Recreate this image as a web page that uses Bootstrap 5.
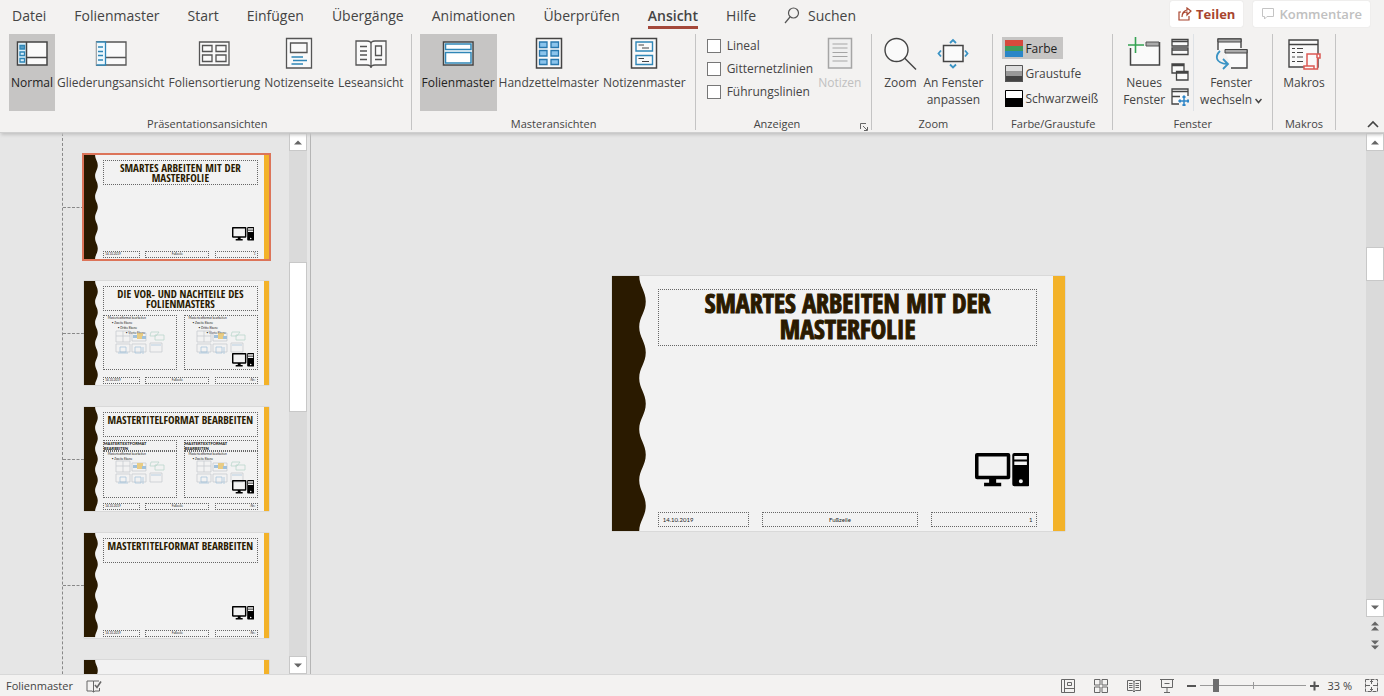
<!DOCTYPE html>
<html lang="de">
<head>
<meta charset="utf-8">
<meta name="viewport" content="width=device-width, initial-scale=1">
<title>Folienmaster – Ansicht</title>
<link href="https://cdn.jsdelivr.net/npm/bootstrap@5.3.0/dist/css/bootstrap.min.css" rel="stylesheet">
<style>
  :root { --ink:#444; --ribbon:#f3f2f1; --desk:#e6e6e6; --pressed:#c6c5c4; --accent:#a4483a; --line:#c4c4c4; --blue:#2f86b7; }
  body { font-family:"Open Sans","Noto Sans",sans-serif; font-size:12px; line-height:17px; color:var(--ink); background:var(--desk); }
  button { font:inherit; color:inherit; background:none; border:0; padding:0; }
  svg { display:block; flex:none; }

  /* tabs */
  .tabbar { height:34px; padding:1px 14px 0 12px; background:var(--ribbon); }
  .tabs { gap:28px; font-size:14px; line-height:20px; padding-top:5px; }
  .tabs a { color:var(--ink); text-decoration:none; }
  .tabs a.current { font-weight:600; border-bottom:3px solid var(--accent); }
  .topbtn { height:26px; padding:0 8px; background:#fff; border-radius:2px; font-size:13px; font-weight:600; box-shadow:0 0 1px #ccc; }
  .share { color:#a8452f; font-weight:700; }
  .muted { color:#c0c0c0; }

  /* ribbon */
  .ribbon { background:var(--ribbon); height:99px; border-bottom:1px solid #cfcfcf; box-shadow:0 3px 3px -1px #c4c4c4; z-index:1; }
  .grp { border-right:1px solid var(--line); height:96px; }
  .grp-body { height:77px; }
  .grp-name { font-size:11px; line-height:16px; padding-top:5px; text-align:center; position:relative; }
  .big { height:77px; padding:3px 2px 0; white-space:nowrap; line-height:17px; display:flex; flex-direction:column; align-items:center; gap:4px; }
  .big.on, .rowbtn.on { background:var(--pressed); color:#222; }
  .check { display:flex; align-items:center; gap:6px; height:23px; white-space:nowrap; }
  .check input { appearance:none; width:14px; height:14px; border:1px solid #777; background:#fff; margin:0; }
  .rowbtn { display:flex; align-items:center; gap:2px; height:22px; padding:0 6px 0 3px; }
  .rows { gap:3px; padding-top:3px; }
  .launcher { position:absolute; right:-5px; bottom:1px; }

  /* slides */
  .slide { display:flex; aspect-ratio:453/255; background:#f2f2f2; box-shadow:0 0 1px #999; position:relative; overflow:hidden; font-family:Lato,"Open Sans",sans-serif; color:#222; }
  .slide .wave { width:8%; height:100%; }
  .slide .stripe { width:12px; background:#f3b229; }
  .slide-body { flex:1; min-width:0; padding:3% 4% 1% 2%; display:flex; flex-direction:column; }
  .stage .slide-body { padding-right:16px; padding-left:10px; }
  .ph { border:1px dotted #666; }
  .slide h2 { height:24%; margin:0; text-align:center; text-transform:uppercase; color:#2a1a00; font-family:"Open Sans Condensed",sans-serif; font-weight:700; -webkit-text-stroke:1px #2a1a00; font-size:26px; line-height:26px; }
  .foot { display:flex; justify-content:space-between; margin-top:auto; height:6%; font-size:6px; line-height:13px; }
  .foot .f1 { width:24%; padding-left:1%; }
  .foot .f2 { width:41%; text-align:center; }
  .foot .f3 { width:28%; padding-right:1%; text-align:right; }
  .pc { position:absolute; width:12%; left:80%; top:69.5%; }
  .stage .slide { width:43%; }
  .slide.thumb { width:185px; }
  .thumb .slide-body { padding:5px 6px 1px 4px; }
  .thumb .stripe { width:5px; }
  .thumb h2 { font-size:11px; line-height:10px; height:25px; padding-top:2px; -webkit-text-stroke:0; }
  .thumb .foot { height:7px; font-size:3px; line-height:5px; }
  .thumb .pair { display:flex; justify-content:space-between; }
  .thumb .pair > div { width:48%; position:relative; font-size:3px; line-height:5px; white-space:nowrap; }
  .tall { height:55px; }
  .mid { height:47px; }
  .thumb .pair > .capbox { height:11px; font-size:4px; font-weight:900; text-transform:uppercase; line-height:5px; }
  .art { position:absolute; left:11px; top:14px; opacity:.8; }
  .mid .art { top:8px; }
  .l1 { padding-left:4px; } .l2 { padding-left:8px; } .l3 { padding-left:14px; } .l4 { padding-left:22px; }

  .pane { width:289px; overflow:hidden; }
  .tree { margin:0 0 0 62px; padding:22px 0 0; list-style:none; border-left:1px dashed #888; gap:22px; }
  .twig { width:21px; border-top:1px dashed #888; }
  .chosen .thumb { outline:2px solid #dc7459; }
  .split { width:22px; border-right:1px solid #b5b5b5; padding-right:3px; }

  /* scroll bars */
  .sbar { width:18px; background:#dadada; }
  .sbar button, .knob { background:#fff; border:1px solid #c8c8c8; }
  .sbar button { height:18px; display:flex; align-items:center; justify-content:center; }
  .sbar .jump { background:var(--desk); border:0; height:19px; }

  /* status bar */
  .status { height:22px; background:var(--ribbon); border-top:1px solid #d8d8d8; font-size:11px; padding:0 6px; z-index:1; }
  .status input { appearance:none; width:106px; height:14px; margin:0 4px; background:linear-gradient(#999,#999) center/1px 7px no-repeat, linear-gradient(#999,#999) center/100% 1px no-repeat; }
  .status input::-webkit-slider-thumb { appearance:none; width:6px; height:13px; background:#6e6e6e; }
</style>
</head>
<body class="vh-100 d-flex flex-column overflow-hidden">

<svg width="0" height="0" class="position-absolute" aria-hidden="true">
  <symbol id="wave" viewBox="0 0 36 255" preserveAspectRatio="none"><path fill="#2a1a00" d="M0 0H27C27 10 33.500 15 33.500 25.500S27 41 27 51 33.500 66 33.500 76.500 27 92 27 102 33.500 117 33.500 127.500 27 143 27 153 33.500 168 33.500 178.500 27 194 27 204 33.500 219 33.500 229.500 27 245 27 255H0Z"/></symbol>
  <symbol id="pc" viewBox="0 0 54 34"><path fill-rule="evenodd" d="M2 0H33Q35 0 35 2V24Q35 26 33 26H21V29.500H26V33H9V29.500H14V26H2Q0 26 0 24V2Q0 0 2 0ZM3.500 3.500V22.500H31.500V3.500ZM39 0H52Q54 0 54 2V31Q54 33 52 33H39Q37 33 37 31V2Q37 0 39 0ZM39 3V6.500H51.500V3ZM39 8.500V12H51.500V8.500ZM45.500 26A2 2 0 1 0 45.500 30 2 2 0 1 0 45.500 26Z"/></symbol>
  <symbol id="art" viewBox="0 0 50 26"><g fill="none" stroke="#b9bfc4" stroke-width=".7"><path d="M1 1H15V12H1ZM1 6H15M8 1V12M17 3H31V11H17ZM1 14H15V22H1ZM17 14H31V22H17ZM35 13H47V22H35Z"/><path stroke="#a8cfc0" d="M36 2H44L41 6H35ZM40 5H49V10H40Z"/><path stroke="#8db6d6" d="M5 17H11V22H5ZM3 23H13M20 17H26V23H20ZM28 17V24M36 15H46"/></g><path fill="#e6c36b" d="M22 3H28V9H22Z"/><path fill="#8db6d6" d="M18 5H22V8H18ZM27 6H31V9H27Z"/></symbol>
  <symbol id="up" viewBox="0 0 8 5"><path fill="#666" d="M0 4.500L4 .5 8 4.500Z"/></symbol>
  <symbol id="down" viewBox="0 0 8 5"><path fill="#666" d="M0 .5L4 4.500 8 .5Z"/></symbol>
</svg>

<header class="tabbar d-flex justify-content-between align-items-start flex-shrink-0">
  <nav class="tabs d-flex">
    <a href="#">Datei</a><a href="#">Folienmaster</a><a href="#">Start</a><a href="#">Einfügen</a><a href="#">Übergänge</a><a href="#">Animationen</a><a href="#">Überprüfen</a><a href="#" class="current">Ansicht</a><a href="#">Hilfe</a>
    <a href="#" class="d-flex gap-2"><svg width="16" height="18" viewBox="0 0 16 18" fill="none" stroke="#555" stroke-width="1.200"><circle cx="9.500" cy="7" r="5"/><path d="M6 11L1 17"/></svg>Suchen</a>
  </nav>
  <div class="d-flex" style="gap:10px">
    <button class="topbtn share d-flex align-items-center gap-1"><svg width="14" height="14" viewBox="0 0 14 14" fill="none" stroke="#a8452f" stroke-width="1.200"><path d="M3 5H1V13H11V9M4 10Q4 5 9 5V8L13 4 9 1V3Q4 4 4 10Z"/></svg>Teilen</button>
    <button class="topbtn muted d-flex align-items-center gap-1" disabled><svg width="14" height="14" viewBox="0 0 14 14" fill="none" stroke="#c4c4c4"><path d="M1.500 1.500H12.500V9.500H6L3.500 12V9.500H1.500Z"/></svg>Kommentare</button>
  </div>
</header>

<section class="ribbon d-flex flex-shrink-0 position-relative">
  <div class="grp" style="padding:0 5px 0 9px">
    <div class="grp-body d-flex">
      <button class="big on"><svg width="32" height="33" viewBox="0 0 32 33"><path fill="#fafafa" stroke="#444" stroke-width="1.500" d="M1.500 5H31V28H1.500Z"/><path fill="#d8effa" d="M2.500 6H10V27H2.500Z"/><path fill="none" stroke="#444" stroke-width="1.500" d="M10.500 5V28M10.500 20.500H31"/><g stroke="#2f86b7" stroke-width="1.300" fill="none"><path fill="#5b9fc5" d="M4 8.500H8.500V12H4Z"/><path d="M4 15H8.500V18.500H4ZM4 21.500H8.500V25H4Z"/></g></svg>Normal</button>
      <button class="big"><svg width="32" height="33" viewBox="0 0 32 33"><path fill="#fafafa" stroke="#555" stroke-width="1.300" d="M1.500 5H31V28H1.500ZM11 20.500H31"/><path fill="#eef8fd" stroke="#2f86b7" stroke-width="1.300" d="M1.500 5H10.500V28H1.500M3 10H8M3 14.500H8M3 18.500H8M3 23H8"/></svg>Gliederungsansicht</button>
      <button class="big"><svg width="32" height="33" viewBox="0 0 32 33" fill="#fafafa" stroke="#555" stroke-width="1.300"><path d="M1.500 5H31V28H1.500Z"/><path d="M4.500 8.500H14V14.500H4.500ZM18 8.500H28V14.500H18ZM4.500 18H14V24.500H4.500ZM18 18H28V24.500H18Z"/></svg>Foliensortierung</button>
      <button class="big"><svg width="28" height="33" viewBox="0 0 28 33" fill="#fafafa" stroke="#555" stroke-width="1.300"><path d="M1.500 1.500H26.500V31H1.500Z"/><path d="M5.500 6H22V15.500H5.500Z"/><path stroke="#2f86b7" d="M6.500 20H18M8 23.500H22M6.500 27H18"/></svg>Notizenseite</button>
      <button class="big"><svg width="34" height="33" viewBox="0 0 34 33" fill="#fafafa" stroke="#555" stroke-width="1.300"><path d="M2 4H13Q17 4 17 7 17 4 21 4H32V28H21Q17 28 17 31 17 28 13 28H2ZM17 7V30"/><path d="M6 9.500H13M6 14H13M6 18H13M6 22.500H13M21.500 9H27.500V18.500H21.500ZM21 22.500H28"/></svg>Leseansicht</button>
    </div>
    <div class="grp-name">Präsentationsansichten</div>
  </div>

  <div class="grp" style="padding:0 7px 0 8px">
    <div class="grp-body d-flex">
      <button class="big on"><svg width="32" height="33" viewBox="0 0 32 33"><path fill="#fff" stroke="#444" stroke-width="1.500" d="M1.500 5H31V28H1.500Z"/><path fill="#fff" stroke="#2f86b7" stroke-width="1.500" d="M3.500 7H29V12.500H3.500ZM3.500 15.500H29V26H3.500Z"/></svg>Folienmaster</button>
      <button class="big"><svg width="28" height="33" viewBox="0 0 28 33"><path fill="#fafafa" stroke="#444" stroke-width="1.500" d="M1.500 1.500H26.500V31H1.500Z"/><path fill="#8bc4ec" stroke="#2878ae" stroke-width="1.300" d="M4.500 5H12V10.500H4.500ZM16 5H23.500V10.500H16ZM4.500 13.500H12V19H4.500ZM16 13.500H23.500V19H16ZM4.500 22.500H12V27.500H4.500ZM16 22.500H23.500V27.500H16Z"/></svg>Handzettelmaster</button>
      <button class="big"><svg width="28" height="33" viewBox="0 0 28 33" fill="#fafafa"><path stroke="#444" stroke-width="1.500" d="M1.500 1.500H26.500V31H1.500Z"/><path stroke="#2f86b7" stroke-width="1.400" d="M6 5H22.500V14H6ZM6 18.500H22.500V27.500H6Z"/><path stroke="#444" stroke-width="1.200" d="M8.500 8H14M12 11H19M8.500 21.500H14M12 24.500H19"/></svg>Notizenmaster</button>
    </div>
    <div class="grp-name">Masteransichten</div>
  </div>

  <div class="grp" style="padding:0 8px 0 11px">
    <div class="grp-body d-flex" style="gap:3px">
      <div>
        <label class="check"><input type="checkbox">Lineal</label>
        <label class="check"><input type="checkbox">Gitternetzlinien</label>
        <label class="check"><input type="checkbox">Führungslinien</label>
      </div>
      <button class="big muted" disabled><svg width="28" height="33" viewBox="0 0 28 33" fill="#f0f0f0" stroke="#a5a5a5" stroke-width="1.500"><path d="M2.500 1.500H25.500V31H2.500Z"/><path stroke-width="1.200" d="M6.500 7H21.500M6.500 11H21.500M6.500 15.500H21.500M6.500 19.500H21.500M6.500 24H21.500"/></svg>Notizen</button>
    </div>
    <div class="grp-name pe-3">Anzeigen<button class="launcher" aria-label="Rastereinstellungen"><svg width="8" height="8" viewBox="0 0 8 8" fill="none" stroke="#666"><path d="M.5 6V.5H6M3 3L7 7M7.500 4V7.500H4"/></svg></button></div>
  </div>

  <div class="grp" style="padding:0 7px 0 9px">
    <div class="grp-body d-flex" style="gap:2px">
      <button class="big"><svg width="34" height="33" viewBox="0 0 34 33" fill="#fafafa" stroke="#444" stroke-width="1.400"><circle cx="13.500" cy="13" r="11.500"/><path d="M21.500 21L33 32.500"/></svg>Zoom</button>
      <button class="big"><svg width="32" height="33" viewBox="0 0 32 33" fill="none"><path fill="#fafafa" stroke="#444" stroke-width="1.500" d="M6.500 8.500H26V24.500H6.500Z"/><path stroke="#3a93c4" stroke-width="1.800" d="M13 6L16 3 19 6M13 27.500L16 30.500 19 27.500M4 13.500L1.500 16.500 4 19.500M28 13.500L30.500 16.500 28 19.500"/></svg><span>An Fenster<br>anpassen</span></button>
    </div>
    <div class="grp-name">Zoom</div>
  </div>

  <div class="grp" style="padding:0 8px 0 9px">
    <div class="grp-body rows d-flex flex-column align-items-start">
      <button class="rowbtn on"><svg width="18" height="17" viewBox="0 0 18 17"><path fill="#d6493d" d="M0 0H18V6H0Z"/><path fill="#3e9a5c" d="M0 6H18V11H0Z"/><path fill="#2a86c7" d="M0 11H18V17H0Z"/></svg>Farbe</button>
      <button class="rowbtn"><svg width="18" height="17" viewBox="0 0 18 17"><path fill="#ddd" d="M0 0H18V6H0Z"/><path fill="#999" d="M0 6H18V11H0Z"/><path fill="#444" d="M0 11H18V17H0Z"/><path fill="none" stroke="#555" d="M.5 .5H17.500V16.500H.5Z"/></svg>Graustufe</button>
      <button class="rowbtn"><svg width="18" height="17" viewBox="0 0 18 17"><path fill="#fff" stroke="#000" d="M.5 .5H17.500V16.500H.5Z"/><path d="M0 8H18V17H0Z"/></svg>Schwarzweiß</button>
    </div>
    <div class="grp-name">Farbe/Graustufe</div>
  </div>

  <div class="grp" style="padding:0 8px">
    <div class="grp-body d-flex">
      <button class="big"><svg width="34" height="33" viewBox="0 0 34 33" fill="none"><path fill="#fafafa" d="M3.500 9H32V28H3.500Z"/><path stroke="#444" stroke-width="1.500" d="M3.500 11V28H32.500V5"/><path fill="#aaa" stroke="#555" d="M19 5H32V9H19Z"/><path stroke="#35a353" stroke-width="1.600" d="M8.500 0V16M1 8H17"/></svg><span>Neues<br>Fenster</span></button>
      <div class="d-flex flex-column px-1" style="gap:7px;padding-top:4px">
        <button aria-label="Alle anordnen"><svg width="18" height="18" viewBox="0 0 18 18" fill="#fafafa" stroke="#444" stroke-width="1.300"><path d="M1 1.500H17V8H1ZM1 10H17V16.500H1ZM1 3.500H17M1 12H17"/></svg></button>
        <button aria-label="Überlappend"><svg width="18" height="18" viewBox="0 0 18 18" fill="#fafafa" stroke="#444" stroke-width="1.300"><path d="M1 1H13V10H1ZM1 2.500H13"/><path d="M5.500 8.500H17V17H5.500ZM5.500 10H17"/></svg></button>
        <button aria-label="Teilung verschieben"><svg width="18" height="18" viewBox="0 0 18 18" fill="#fafafa" stroke="#444" stroke-width="1.300"><path d="M8 16H1V1H17V8M1 3.500H17M1 8.500H9"/><path fill="none" stroke="#2f86c7" stroke-width="1.500" d="M13 8V18M8 13H18M11.500 9.500L13 8 14.500 9.500M11.500 16.500L13 18 14.500 16.500M9.500 11.500L8 13 9.500 14.500M16.500 11.500L18 13 16.500 14.500"/></svg></button>
      </div>
      <div class="border-start me-1"></div>
      <button class="big"><svg width="34" height="33" viewBox="0 0 34 33" fill="none"><path fill="#fafafa" stroke="#444" stroke-width="1.400" d="M4 13V2H27V11"/><path fill="#aaa" stroke="#444" d="M4 2H27V5H4Z"/><path fill="#fafafa" stroke="#444" stroke-width="1.400" d="M11 13H33V31H17"/><path fill="#aaa" stroke="#444" d="M11 12.500H33V16H11Z"/><path stroke="#3a93c4" stroke-width="1.800" d="M6 14C1 19 1 26 13 27M9 22L14 27 9 32"/></svg><span>Fenster<br>wechseln <svg class="d-inline" width="7" height="6" viewBox="0 0 7 6" fill="none" stroke="#444" stroke-width="1.500"><path d="M.5 1L3.500 4.500 6.500 1"/></svg></span></button>
    </div>
    <div class="grp-name">Fenster</div>
  </div>

  <div class="grp" style="padding:0 8px">
    <div class="grp-body d-flex">
      <button class="big"><svg width="34" height="33" viewBox="0 0 34 33" fill="#fafafa" stroke="#444" stroke-width="1.400"><path d="M2 3H31V30H2ZM2 7.500H31"/><path stroke-width="1.200" stroke-dasharray="3 2 6 2" d="M5 11.500H18M5 15.500H18M5 20H18M5 24.500H18"/><path stroke="#dc5a54" stroke-width="1.500" d="M20 29V17H33V21H30.500V32H17V29H27V32M30 17V21"/></svg>Makros</button>
    </div>
    <div class="grp-name">Makros</div>
  </div>
  <button class="ms-auto align-self-end me-1" aria-label="Menüband reduzieren"><svg width="14" height="12" viewBox="0 0 14 12" fill="none" stroke="#444" stroke-width="1.600"><path d="M2 7L7 2 12 7"/></svg></button>
</section>

<main class="d-flex flex-grow-1" style="min-height:0">
  <aside class="pane flex-shrink-0">
    <ol class="tree d-flex flex-column">
      <li class="d-flex align-items-center chosen"><span class="twig"></span>
        <div class="slide thumb"><svg class="wave"><use href="#wave"/></svg><div class="slide-body"><h2 class="ph">Smartes Arbeiten mit der<br>Masterfolie</h2><div class="foot"><span class="ph f1">14.10.2019</span><span class="ph f2">Fußzeile</span><span class="ph f3">1</span></div></div><div class="stripe"></div><svg class="pc" viewBox="0 0 54 34"><use href="#pc"/></svg></div></li>
      <li class="d-flex align-items-center"><span class="twig"></span>
        <div class="slide thumb"><svg class="wave"><use href="#wave"/></svg><div class="slide-body"><h2 class="ph">Die Vor- und Nachteile des<br>Folienmasters</h2>
          <div class="pair mt-1">
            <div class="ph tall"><div class="l1">Mastertextformat bearbeiten</div><div class="l2">• Zweite Ebene</div><div class="l3">• Dritte Ebene</div><div class="l4">• Vierte Ebene</div><svg class="art" width="50" height="26"><use href="#art"/></svg></div>
            <div class="ph tall"><div class="l1">Mastertextformat bearbeiten</div><div class="l2">• Zweite Ebene</div><div class="l3">• Dritte Ebene</div><div class="l4">• Vierte Ebene</div><svg class="art" width="50" height="26"><use href="#art"/></svg></div>
          </div>
          <div class="foot"><span class="ph f1">14.10.2019</span><span class="ph f2">Fußzeile</span><span class="ph f3">‹Nr.›</span></div></div><div class="stripe"></div><svg class="pc" viewBox="0 0 54 34"><use href="#pc"/></svg></div></li>
      <li class="d-flex align-items-center"><span class="twig"></span>
        <div class="slide thumb"><svg class="wave"><use href="#wave"/></svg><div class="slide-body"><h2 class="ph">Mastertitelformat bearbeiten</h2>
          <div class="pair" style="padding-top:3px"><div class="ph capbox">Mastertextformat<br>bearbeiten</div><div class="ph capbox">Mastertextformat<br>bearbeiten</div></div>
          <div class="pair">
            <div class="ph mid"><div class="l1">Mastertextformat bearbeiten</div><div class="l2">• Zweite Ebene</div><svg class="art" width="50" height="26"><use href="#art"/></svg></div>
            <div class="ph mid"><div class="l1">Mastertextformat bearbeiten</div><div class="l2">• Zweite Ebene</div><svg class="art" width="50" height="26"><use href="#art"/></svg></div>
          </div>
          <div class="foot"><span class="ph f1">14.10.2019</span><span class="ph f2">Fußzeile</span><span class="ph f3">‹Nr.›</span></div></div><div class="stripe"></div><svg class="pc" viewBox="0 0 54 34"><use href="#pc"/></svg></div></li>
      <li class="d-flex align-items-center"><span class="twig"></span>
        <div class="slide thumb"><svg class="wave"><use href="#wave"/></svg><div class="slide-body"><h2 class="ph">Mastertitelformat bearbeiten</h2><div class="foot"><span class="ph f1">14.10.2019</span><span class="ph f2">Fußzeile</span><span class="ph f3">‹Nr.›</span></div></div><div class="stripe"></div><svg class="pc" viewBox="0 0 54 34"><use href="#pc"/></svg></div></li>
      <li class="d-flex align-items-center"><span class="twig"></span>
        <div class="slide thumb"><svg class="wave"><use href="#wave"/></svg><div class="slide-body"></div><div class="stripe"></div></div></li>
    </ol>
  </aside>
  <div class="split d-flex flex-shrink-0">
    <div class="sbar d-flex flex-column">
      <button aria-label="Nach oben"><svg width="8" height="5"><use href="#up"/></svg></button>
      <div style="flex:111"></div><div class="knob" style="flex:149"></div><div style="flex:244"></div>
      <button aria-label="Nach unten"><svg width="8" height="5"><use href="#down"/></svg></button>
    </div>
  </div>
  <div class="stage flex-grow-1 d-flex align-items-center justify-content-center">
    <div class="slide"><svg class="wave"><use href="#wave"/></svg><div class="slide-body"><h2 class="ph">Smartes Arbeiten mit der<br>Masterfolie</h2><div class="foot"><span class="ph f1">14.10.2019</span><span class="ph f2">Fußzeile</span><span class="ph f3">1</span></div></div><div class="stripe"></div><svg class="pc" viewBox="0 0 54 34"><use href="#pc"/></svg></div>
  </div>
  <div class="sbar d-flex flex-column flex-shrink-0">
    <button aria-label="Nach oben"><svg width="8" height="5"><use href="#up"/></svg></button>
    <div style="flex:96"></div><div class="knob" style="flex:32"></div><div style="flex:319"></div>
    <button aria-label="Nach unten"><svg width="8" height="5"><use href="#down"/></svg></button>
    <button class="jump" aria-label="Vorherige Folie"><svg width="8" height="10" viewBox="0 0 8 10" fill="#666"><path d="M0 4.500L4 .5 8 4.500ZM0 9.500L4 5.500 8 9.500Z"/></svg></button>
    <button class="jump" aria-label="Nächste Folie"><svg width="8" height="10" viewBox="0 0 8 10" fill="#666"><path d="M0 .5L4 4.500 8 .5ZM0 5.500L4 9.500 8 5.500Z"/></svg></button>
    <div class="jump"></div>
  </div>
</main>

<footer class="status d-flex align-items-center flex-shrink-0">
  <span>Folienmaster</span>
  <button style="margin-left:13px" aria-label="Rechtschreibung"><svg width="16" height="14" viewBox="0 0 16 14" fill="none" stroke="#666"><path d="M7.500 2V13M7.500 2H1V12H6L7.500 13 9 12H13.500V9M7.500 2H13"/><path stroke-width="1.600" d="M9 6L11 8.500 15 2.500"/></svg></button>
  <div class="d-flex ms-auto align-items-center">
    <div class="d-flex" style="gap:17px;margin-right:12px">
      <button aria-label="Normal"><svg width="16" height="14" viewBox="0 0 16 14" fill="none" stroke="#666"><path d="M1.500 .5H14.500V13.500H1.500ZM4.500 .5V13.500M4.500 9.500H14.500M7.500 3.500H11.500V6.500H7.500Z"/></svg></button>
      <button aria-label="Foliensortierung"><svg width="16" height="14" viewBox="0 0 16 14" fill="none" stroke="#666"><path d="M1.500 .5H7V6H1.500ZM9 .5H14.500V6H9ZM1.500 8H7V13.500H1.500ZM9 8H14.500V13.500H9Z"/></svg></button>
      <button aria-label="Leseansicht"><svg width="16" height="14" viewBox="0 0 16 14" fill="none" stroke="#666"><path d="M1.500 1.500H6.500L8 2.500 9.500 1.500H14.500V11.500H9.500L8 13 6.500 11.500H1.500ZM8 2V13M3 4.500H6.500M3 6.500H6.500M3 8.500H6.500M9.500 4.500H13M9.500 6.500H13M9.500 8.500H13"/></svg></button>
      <button aria-label="Bildschirmpräsentation"><svg width="16" height="14" viewBox="0 0 16 14" fill="none" stroke="#666"><path d="M1 .5H15M2.500 .5V8.500H13.500V.5M8 8.500V13.500M5 13.500H11M5.500 4.500H10.500"/></svg></button>
    </div>
    <button aria-label="Verkleinern"><svg width="9" height="10" viewBox="0 0 9 10" stroke="#555" stroke-width="2"><path d="M0 5H9"/></svg></button>
    <input type="range" min="10" max="190" value="32" aria-label="Zoom">
    <button aria-label="Vergrößern"><svg width="9" height="10" viewBox="0 0 9 10" stroke="#555" stroke-width="2"><path d="M0 5H9M4.500 .5V9.500"/></svg></button>
    <span style="margin:0 13px 0 8px">33 %</span>
    <button aria-label="An Fenster anpassen"><svg width="13" height="13" viewBox="0 0 13 13" fill="none" stroke="#666"><path stroke-dasharray="4 1" d="M.5 .5H12.500V12.500H.5Z"/><path d="M6.500 1V5M6.500 8V12M1 6.500H5M8 6.500H12M5 3L6.500 1.500 8 3M5 10L6.500 11.500 8 10"/></svg></button>
  </div>
</footer>
<script src="https://cdn.jsdelivr.net/npm/bootstrap@5.3.0/dist/js/bootstrap.bundle.min.js"></script>
</body>
</html>
